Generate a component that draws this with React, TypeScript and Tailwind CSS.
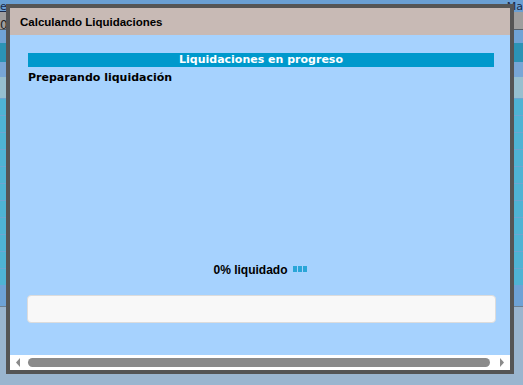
/**
 * Modal de progreso "Calculando Liquidaciones" sobre una página de fondo.
 */

const bgRows: { h: string; bg: string; line?: boolean }[] = [
  { h: 'h-[18px]', bg: 'bg-[#9e9e9e]', line: true },
  { h: 'h-[13px]', bg: 'bg-[#70a3d6]' },
  { h: 'h-[19px]', bg: 'bg-[#2b93b5]' },
  { h: 'h-[15px]', bg: 'bg-[#78a6d6]' },
  { h: 'h-[21px]', bg: 'bg-[#97bfcf]' },
];

function BackgroundPage() {
  // La página de detrás, apenas visible en los bordes
  return (
    <div className="flex flex-col w-[523px] h-[385px] bg-[#9ab5cf]">
      <div className="h-[12px] bg-[#6a9fd3] flex justify-between items-end text-[11px] leading-none text-[#1b2a4a] font-['DejaVu_Sans',sans-serif]">
        <span className="underline">er</span>
        <span>Ma</span>
      </div>
      {bgRows.map((r, i) => (
        <div key={i} className={`${r.h} ${r.bg} ${r.line ? 'border-b border-[#55606a]' : ''}`}>
          {i === 0 && <span className="text-[12px] leading-[17px] text-[#222] font-['DejaVu_Sans',sans-serif]">0</span>}
        </div>
      ))}
      {Array.from({ length: 11 }).map((_, i) => (
        <div key={i} className="h-[17px] bg-[#4fb3d4] border-t border-[#6ea5d2]" />
      ))}
      <div className="h-[22px] bg-[#6ea2d6] border-b border-[#6d7f90]" />
    </div>
  );
}

export default function App() {
  return (
    <div className="relative w-[523px] h-[385px] overflow-hidden font-['DejaVu_Sans',sans-serif]">
      <BackgroundPage />
      <div className="absolute left-[6px] top-[4px] w-[508px] h-[370px] border-4 border-[#555555] flex flex-col bg-[#a6d2fe]">
        <div className="h-[27px] bg-[#c8bab5] flex items-center pl-[10px] pt-[2px] text-[11.5px] font-bold text-black font-['Liberation_Sans',sans-serif]">
          Calculando Liquidaciones
        </div>
        <div className="flex-1 flex flex-col pt-[18px] pl-[18px] pr-[16px]">
          <div className="h-[14px] bg-[#0099cc] text-white text-[11px] font-bold leading-[14px] text-center">
            Liquidaciones en progreso
          </div>
          <div className="mt-[4px] text-[11px] font-bold text-black leading-[14px]">
            Preparando liquidación
          </div>
          <div className="mt-[178px] flex justify-center items-center gap-[5px] text-[12px] font-bold text-black leading-[14px] pr-[2px] font-['Liberation_Sans',sans-serif]">
            <span>0% liquidado</span>
            <span className="flex gap-[1px] mt-[-3px]">
              <span className="w-[4px] h-[6px] bg-[#2aa6d8]" />
              <span className="w-[4px] h-[6px] bg-[#2aa6d8]" />
              <span className="w-[4px] h-[6px] bg-[#2aa6d8]" />
            </span>
          </div>
          <div className="mt-[18px] -ml-[1px] h-[28px] w-[469px] bg-[#f8f8f8] border border-[#dcdcdc] rounded-[4px]" />
        </div>
        <div className="h-[15px] bg-white flex items-center px-[5px] gap-[7px]">
          <svg width="6" height="9" viewBox="0 0 6 9">
            <path d="M5 0 L1 4.5 L5 9 Z" fill="#8a8a8a" />
          </svg>
          <div className="flex-1 h-[9px] rounded-full bg-[#8a8a8a] mr-[2px]" />
          <svg width="6" height="9" viewBox="0 0 6 9">
            <path d="M1 0 L5 4.5 L1 9 Z" fill="#8a8a8a" />
          </svg>
        </div>
      </div>
    </div>
  );
}
